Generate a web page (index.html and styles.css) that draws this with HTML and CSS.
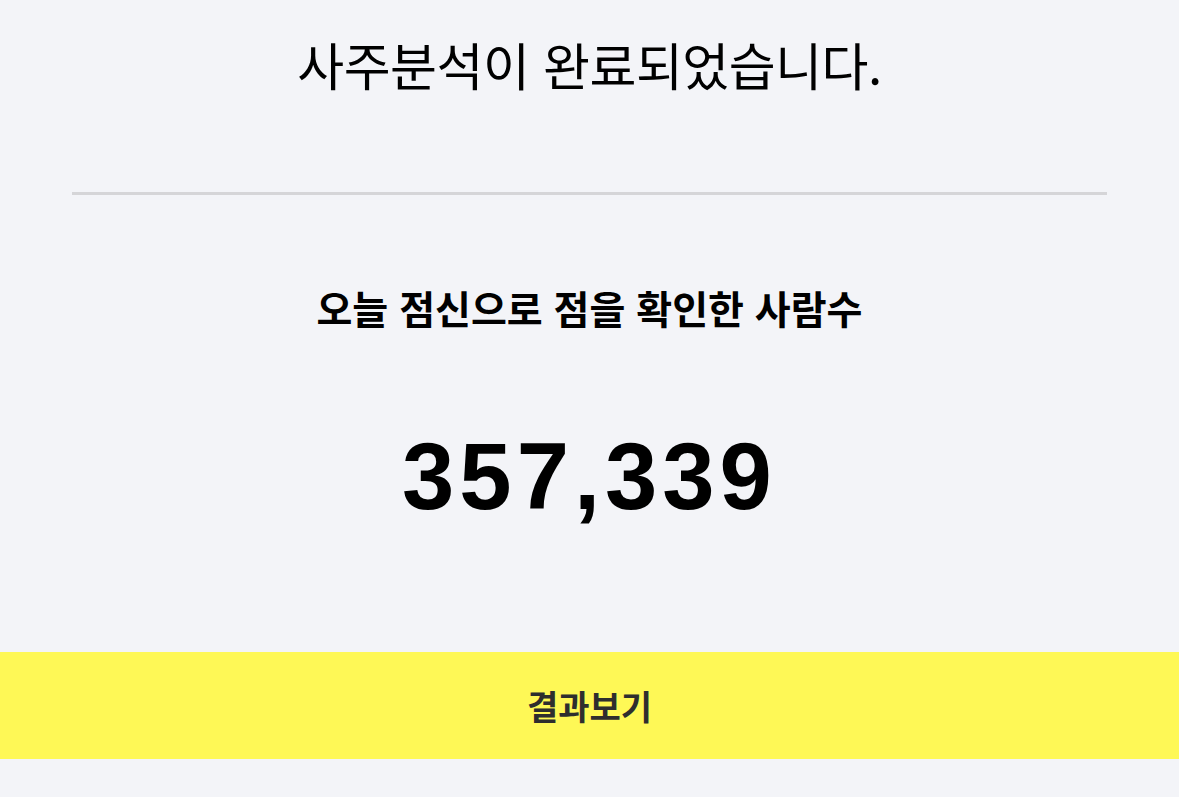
FILE: index.html
```html
<!DOCTYPE html>
<html lang="ko">
<head>
    <meta charset="UTF-8">
    <meta name="viewport" content="width=device-width, initial-scale=1.0">
    <title>사주분석 완료</title>
    <link rel="stylesheet" href="styles.css">
</head>
<body>
    <h1 class="title">사주분석이 완료되었습니다.</h1>

    <hr class="divider">

    <div class="count-box">
        <p class="count-label">오늘 점신으로 점을 확인한 사람수</p>
        <p class="count-number">357,339</p>
    </div>

    <button class="result-button">결과보기</button>
</body>
</html>
```

FILE: styles.css
```css
body {
    background-color: #f3f4f8;
    color: #000;
    font-family: 'Noto Sans CJK KR', 'Noto Sans', sans-serif;
    margin: 0;
    padding: 0;
}

.title {
    margin: 0;
    padding-top: 32px;
    font-size: 51px;
    font-weight: 400;
    line-height: 64px;
    text-align: center;
    letter-spacing: -0.5px;
}

.divider {
    margin: 96px 72px 0;
    border: none;
    height: 3px;
    background-color: #d5d5d8;
}

.count-box {
    text-align: center;
}

.count-label {
    margin: 89px 0 0;
    font-size: 39px;
    font-weight: 700;
    line-height: 46px;
}

.count-number {
    margin: 100px 0 0;
    font-family: 'Liberation Sans', Arial, sans-serif;
    font-size: 94px;
    font-weight: 700;
    line-height: 1;
    letter-spacing: 5px;
}

.result-button {
    display: block;
    width: 100%;
    height: 107px;
    margin-top: 128px;
    padding: 0;
    border: none;
    background-color: #fef856;
    color: #2e2e2e;
    font-family: 'Noto Sans CJK KR', 'Noto Sans', sans-serif;
    font-size: 34px;
    font-weight: 700;
    cursor: pointer;
}
```
